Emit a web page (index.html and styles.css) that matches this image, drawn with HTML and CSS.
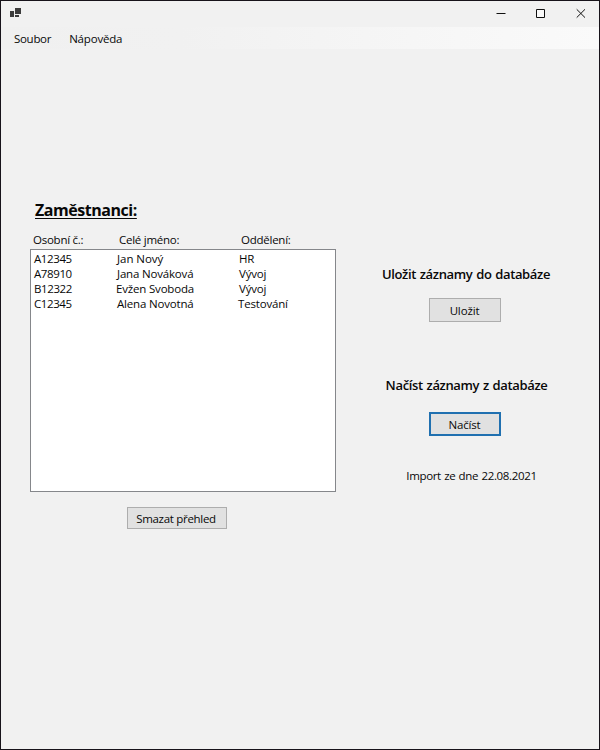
FILE: index.html
```html
<!DOCTYPE html>
<html lang="cs">
<head>
<meta charset="utf-8">
<title>Zaměstnanci</title>
<link rel="stylesheet" href="styles.css">
</head>
<body>
<div class="window">
  <header class="titlebar">
    <svg class="app-icon" width="12" height="11" viewBox="0 0 12 11" shape-rendering="crispEdges">
      <path fill="#3c3c3c" d="M5 0h6v6H5zM0 3h4v6H0zM5 7h4v2H5z"/>
    </svg>
    <div class="controls">
      <svg width="10" height="10" viewBox="0 0 10 10"><path d="M0.5 5.5h9"/></svg>
      <svg width="10" height="10" viewBox="0 0 10 10"><path fill="#fafafa" d="M.5 1.5h8v8h-8z"/></svg>
      <svg width="10" height="10" viewBox="0 0 10 10"><path d="M.7 1.3l8.3 8.3M9 1.3L.7 9.6"/></svg>
    </div>
  </header>
  <nav class="menubar"><span class="file">Soubor</span><span>Nápověda</span></nav>
  <main class="content">
    <section class="employees">
      <h1>Zaměstnanci:</h1>
      <div class="row head"><span>Osobní č.:</span><span>Celé jméno:</span><span>Oddělení:</span></div>
      <div class="list">
        <div class="row"><span class="id">A12345</span><span class="short">Jan Nový</span><span>HR</span></div>
        <div class="row"><span class="id">A78910</span><span>Jana Nováková</span><span>Vývoj</span></div>
        <div class="row shifted"><span class="id">B12322</span><span>Evžen Svoboda</span><span>Vývoj</span></div>
        <div class="row last"><span class="id">C12345</span><span>Alena Novotná</span><span>Testování</span></div>
      </div>
      <button class="clear">Smazat přehled</button>
    </section>
    <section class="database">
      <h2>Uložit záznamy do databáze</h2>
      <button class="save">Uložit</button>
      <h2 class="load-title">Načíst záznamy z databáze</h2>
      <button class="load">Načíst</button>
      <p>Import ze dne 22.08.2021</p>
    </section>
  </main>
</div>
</body>
</html>
```
FILE: styles.css
```css
* { box-sizing: border-box; }
body { margin: 0; font: 11.5px/15px "Open Sans", "Noto Sans", sans-serif; letter-spacing: -0.18px; color: #080808; }
.window { width: 600px; height: 750px; border: 1px solid #17131a; background: #f1f1f1; display: flex; flex-direction: column; overflow: hidden; }
.titlebar { height: 26px; padding: 7px 13px 0 8px; display: flex; justify-content: space-between; }
.app-icon { margin-left: 1px; }
.controls { display: flex; gap: 30px; }
.controls svg { fill: none; stroke: #111; stroke-width: 1; overflow: visible; }
.menubar { height: 22px; padding: 4px 13px; display: flex; gap: 18px; background: linear-gradient(90deg, #f0f0f0 0, #f1f1f1 30%, #fafafa 100%); }
.file { letter-spacing: -0.3px; }
.content { flex: 1; display: flex; align-items: flex-start; padding-left: 29px; gap: 27px; }
.employees { width: 306px; padding-top: 149px; display: flex; flex-direction: column; }
h1 { margin: 0 0 0 5px; font-size: 16px; line-height: 24px; font-weight: 700; letter-spacing: -0.46px; text-decoration: underline; text-underline-offset: 2px; text-decoration-thickness: 1px; }
.row { display: grid; grid-template-columns: 83px 122px 1fr; padding-left: 3px; height: 15px; white-space: nowrap; }
.head { grid-template-columns: 86px 122px 1fr; height: 26px; padding-top: 10px; letter-spacing: -0.25px; }
.list { height: 243px; margin-top: 1px; padding-top: 1px; border: 1px solid #85878b; background: #fff; }
.id { letter-spacing: -0.4px; }
.short { letter-spacing: -0.05px; }
.shifted { grid-template-columns: 82px 123px 1fr; }
.last { grid-template-columns: 83px 121px 1fr; }
button { font: inherit; letter-spacing: -0.15px; color: #080808; background: #e1e1e1; border: 1px solid #adadad; padding: 0; height: 24px; width: 72px; }
.clear { width: 100px; height: 22px; margin: 15px 0 0 97px; padding-right: 2px; letter-spacing: -0.3px; }
.database { width: 206px; padding-top: 215px; display: flex; flex-direction: column; align-items: center; }
h2 { margin: 0; font-size: 13px; line-height: 20px; font-weight: 600; letter-spacing: -0.35px; word-spacing: 0.7px; white-space: nowrap; }
.save { margin-top: 14px; margin-right: 3px; }
.load-title { margin-top: 53px; margin-left: 1px; }
.load { margin-top: 17px; margin-right: 3px; border: 2px solid #2070b0; }
p { margin: 32px 0 0 11px; letter-spacing: -0.33px; word-spacing: 0.6px; }
```
